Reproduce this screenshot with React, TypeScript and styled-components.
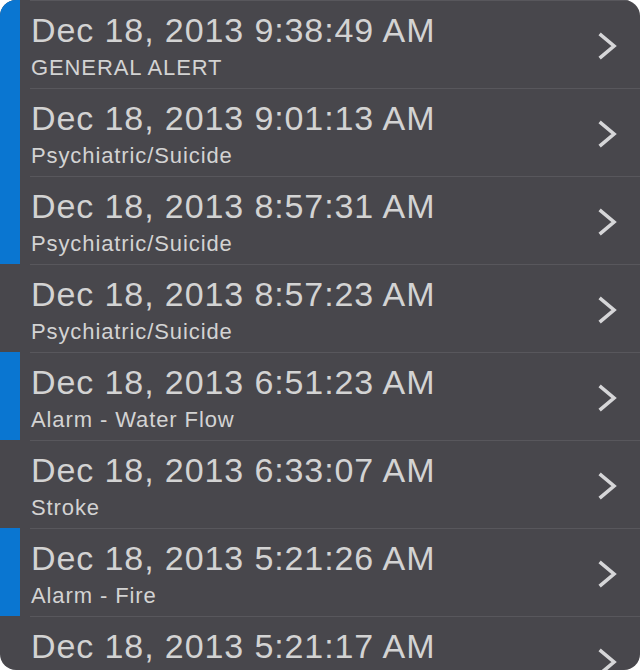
import React from "react";
import styled, { createGlobalStyle } from "styled-components";

const Global = createGlobalStyle`
  html, body { margin: 0; padding: 0; background: #ffffff; }
  body { width: 640px; height: 670px; overflow: hidden; }
`;

const Panel = styled.div`
  width: 640px;
  height: 670px;
  background: #48474c;
  border-radius: 16px;
  overflow: hidden;
  font-family: "Liberation Sans", Arial, Helvetica, sans-serif;
`;

const Row = styled.div`
  display: flex;
  height: 88px;
`;

const Flag = styled.div<{ $on: boolean }>`
  width: 20px;
  flex: 0 0 20px;
  background: ${(p) => (p.$on ? "#0a76d1" : "transparent")};
`;

const Content = styled.div`
  flex: 1;
  margin-left: 10px;
  border-top: 1px solid #58575c;
  display: flex;
  align-items: center;
  padding-left: 1px;
  padding-right: 21px;
`;

const Texts = styled.div`
  flex: 1;
  align-self: flex-start;
  padding-top: 11px;
  display: flex;
  flex-direction: column;
`;

const DateLine = styled.div`
  font-size: 34px;
  line-height: 37px;
  letter-spacing: 0.9px;
  color: #d3d3d3;
  white-space: nowrap;
`;

const Kind = styled.div`
  margin-top: 7px;
  font-size: 22px;
  line-height: 24px;
  letter-spacing: 0.9px;
  color: #d3d3d3;
  white-space: nowrap;
`;

const Chevron = styled.svg`
  width: 22px;
  height: 28px;
  flex: 0 0 22px;
  margin-top: 2px;
`;

const rows = [
  { t: "Dec 18, 2013 9:38:49 AM", k: "GENERAL ALERT", f: true },
  { t: "Dec 18, 2013 9:01:13 AM", k: "Psychiatric/Suicide", f: true },
  { t: "Dec 18, 2013 8:57:31 AM", k: "Psychiatric/Suicide", f: true },
  { t: "Dec 18, 2013 8:57:23 AM", k: "Psychiatric/Suicide", f: false },
  { t: "Dec 18, 2013 6:51:23 AM", k: "Alarm - Water Flow", f: true },
  { t: "Dec 18, 2013 6:33:07 AM", k: "Stroke", f: false },
  { t: "Dec 18, 2013 5:21:26 AM", k: "Alarm - Fire", f: true },
  { t: "Dec 18, 2013 5:21:17 AM", k: "", f: false },
];

export default function App() {
  return (
    <>
      <Global />
      <Panel>
        {rows.map((r, i) => (
          <Row key={i}>
            <Flag $on={r.f} />
            <Content>
              <Texts>
                <DateLine>{r.t}</DateLine>
                {r.k && <Kind>{r.k}</Kind>}
              </Texts>
              <Chevron viewBox="0 0 22 28">
                <polyline
                  points="4,3 17,14 4,25"
                  fill="none"
                  stroke="#d6d6d8"
                  strokeWidth="3.6"
                  strokeLinecap="square"
                  strokeLinejoin="miter"
                />
              </Chevron>
            </Content>
          </Row>
        ))}
      </Panel>
    </>
  );
}
